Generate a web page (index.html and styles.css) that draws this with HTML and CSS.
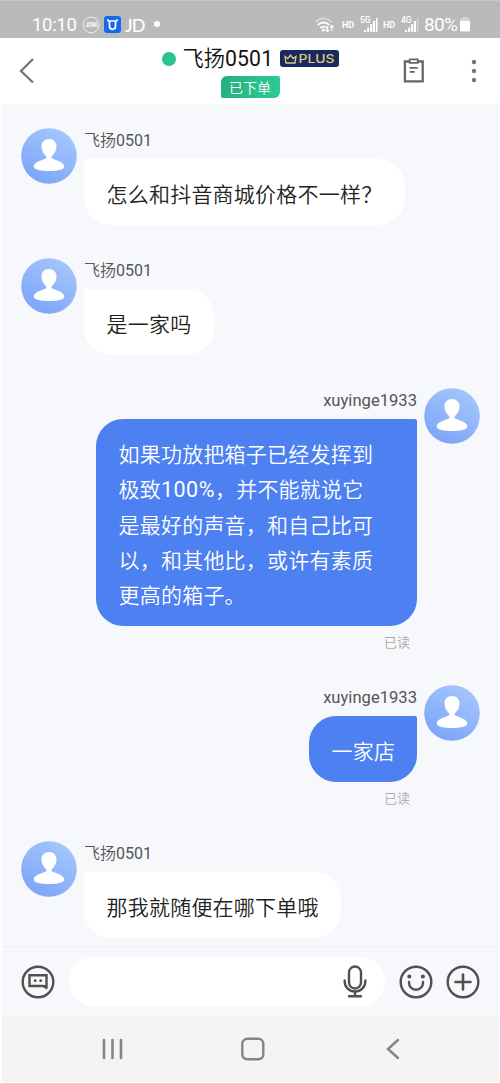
FILE: index.html
```
<!DOCTYPE html>
<html lang="zh-CN">
<head>
<meta charset="utf-8">
<title>飞扬0501</title>
<link rel="stylesheet" href="styles.css">
</head>
<body>
<svg class="defs" width="0" height="0">
  <defs>
    <linearGradient id="sky" x1="0.8" y1="0" x2="0.2" y2="1"><stop offset="0" stop-color="#a6c8fd"/><stop offset="1" stop-color="#7ba3f8"/></linearGradient>
    <symbol id="avatar" viewBox="0 0 56 56">
      <circle cx="28" cy="28" r="27.8" fill="url(#sky)"/>
      <path fill="#fff" d="M28 11c4.600 0 7.500 3.200 7.500 7.500 0 3.500-1.800 7.200-4.400 9.400-1 .9-.8 2.200.6 2.800 3.400 1.400 11.600 3.500 11.600 7.600 0 4-8 4.700-15.300 4.700s-15.300-.7-15.300-4.700c0-4.100 8.200-6.200 11.600-7.600 1.400-.6 1.600-1.900.6-2.800-2.600-2.200-4.400-5.900-4.400-9.400C20.500 14.200 23.400 11 28 11z"/>
    </symbol>
  </defs>
</svg>
<div class="phone">
  <div class="status">
    <span class="clock">10:10</span>
    <svg class="jdm" width="18" height="18" viewBox="0 0 18 18"><circle cx="9" cy="9" r="7.900" fill="none" stroke="#eee" stroke-width="1"/><text x="3.200" y="11.200" textLength="11.600" lengthAdjust="spacingAndGlyphs" class="jdm-text">JDM</text></svg>
    <svg class="app" width="17" height="17" viewBox="0 0 17 17"><rect width="17" height="17" rx="3" fill="#1768ee"/><path d="M3.600 3.300 4.300 5h8.400l.7-1.700M5.500 5v5.300a3 3 0 0 0 6 0V5" fill="none" stroke="#fff" stroke-width="1.700"/></svg>
    <span class="jd">JD</span>
    <span class="dot"></span>
    <span class="grow"></span>
    <svg class="wifi" width="21" height="16" viewBox="0 0 21 16" fill="none" stroke-width="1.700"><path d="M1 5.200Q9.500-2.400 18 5.200" stroke="#d6d6d6"/><path d="M3.600 8q5.900-5 11.800 0M6.200 11q3.300-2.800 6.600 0" stroke="#fff"/><circle cx="9.300" cy="13" r="1.500" fill="#fff"/><path d="M13.500 9v5.500m-1.800-1.700 1.800 1.800 1.800-1.800M17.800 14V8.500M16 10.300l1.800-1.800 1.800 1.800" stroke="#fff" stroke-width="1.200"/></svg>
    <span class="hd">HD</span>
    <svg class="signal" width="19" height="17" viewBox="0 0 19 17"><text x="0" y="6.500" class="net">5G</text><path d="M4 14h2v2H4zM7.200 11.500h2V16h-2zM10.200 8h2v8h-2zM13 5h2v11h-2zM15.900 2h1.600v14h-1.600z" fill="#fff"/></svg>
    <span class="hd hd2">HD</span>
    <svg class="signal sig2" width="19" height="17" viewBox="0 0 19 17"><text x="0" y="6.500" class="net">4G</text><path d="M4 14h2v2H4zM7.200 11.500h2V16h-2zM10.200 8h2v8h-2zM13 5h2v11h-2z" fill="#fff"/><path d="M15.900 2h1.600v14h-1.600z" fill="#d0d0d0"/></svg>
    <span class="percent">80%</span>
    <svg class="battery" width="10" height="15" viewBox="0 0 10 15"><path d="M3 0h4v1.500H3zM1.500 1.500h7Q10 1.500 10 3v2H0V3q0-1.500 1.500-1.500z" fill="#d6d6d6"/><path d="M0 4h10v9q0 1.500-1.500 1.500h-7Q0 14.500 0 13z" fill="#fff"/></svg>
  </div>

  <header class="header">
    <svg class="back" width="18" height="28" viewBox="0 0 18 28"><path d="M15 2 3 14l12 11.500" fill="none" stroke="#757575" stroke-width="2.300"/></svg>
    <div class="title">
      <div class="title-row">
        <span class="online"></span>
        <span class="peer">飞扬<span class="digits">0501</span></span>
        <span class="plus"><svg width="13" height="10" viewBox="0 0 13 10"><path d="M1 2.500 3.800 4.600 6.500 1l2.700 3.600L12 2.500 11 9H2z" fill="none" stroke="#e3c978" stroke-width="1.300"/></svg><svg width="37" height="13" viewBox="0 0 37 13"><text x="0.500" y="10.500" textLength="36" lengthAdjust="spacingAndGlyphs" class="plus-text">PLUS</text></svg></span>
      </div>
      <span class="ordered">已下单</span>
    </div>
    <div class="tools">
      <svg width="22" height="26" viewBox="0 0 22 26" fill="none" stroke="#666" stroke-width="2.300"><path d="M1.900 3.500h17.800v19.800H1.900z"/><path d="M6.700 1.300h8v3.500h-8z" fill="#fff" stroke-width="1.800"/><path d="M6.700 9.800h8M6.700 13.800h5" stroke-width="1.800"/></svg>
      <svg width="6" height="24" viewBox="0 0 6 24" fill="#757575"><circle cx="3" cy="3" r="2.200"/><circle cx="3" cy="12" r="2.200"/><circle cx="3" cy="21" r="2.200"/></svg>
    </div>
  </header>

  <main class="chat">
    <article class="msg">
      <svg class="avatar"><use href="#avatar"/></svg>
      <div class="body"><span class="name">飞扬<span class="digits">0501</span></span><p class="bubble">怎么和抖音商城价格不一样？</p></div>
    </article>
    <article class="msg">
      <svg class="avatar"><use href="#avatar"/></svg>
      <div class="body"><span class="name">飞扬<span class="digits">0501</span></span><p class="bubble">是一家吗</p></div>
    </article>
    <article class="msg mine">
      <svg class="avatar"><use href="#avatar"/></svg>
      <div class="body"><span class="name">xuyinge1933</span><p class="bubble">如果功放把箱子已经发挥到<br>极致<span class="digits">100%</span>，并不能就说它<br>是最好的声音，和自己比可<br>以，和其他比，或许有素质<br>更高的箱子。</p><span class="read">已读</span></div>
    </article>
    <article class="msg mine">
      <svg class="avatar"><use href="#avatar"/></svg>
      <div class="body"><span class="name">xuyinge1933</span><p class="bubble">一家店</p><span class="read">已读</span></div>
    </article>
    <article class="msg">
      <svg class="avatar"><use href="#avatar"/></svg>
      <div class="body"><span class="name">飞扬<span class="digits">0501</span></span><p class="bubble">那我就随便在哪下单哦</p></div>
    </article>
  </main>

  <footer class="composer">
    <svg width="34" height="34" viewBox="0 0 34 34" fill="none" stroke="#505050" stroke-width="2.400"><circle cx="17" cy="17" r="15.300"/><path d="M8.500 10.300h17V22l-3.200-1H8.500z"/><path d="M21 20.500h4.500V24z" fill="#505050" stroke-width="1"/><circle cx="14.200" cy="15.700" r="1.400" fill="#505050" stroke="none"/><circle cx="19.700" cy="15.700" r="1.400" fill="#505050" stroke="none"/></svg>
    <div class="input">
      <svg width="24" height="33" viewBox="0 0 24 33" fill="none" stroke="#505050" stroke-width="2.400" stroke-linecap="round"><rect x="6" y="1.500" width="12" height="22" rx="6"/><path d="M1.700 15.500v1.300a10.300 9.700 0 0 0 20.600 0v-1.300M12 26.700V31M6 31.300h12"/></svg>
    </div>
    <svg class="smile" width="34" height="34" viewBox="0 0 34 34" fill="none" stroke="#505050" stroke-width="2.400"><circle cx="17" cy="17" r="15.300"/><path d="M10 17v.8a7 7 0 0 0 14 0V17" stroke-linecap="round"/><circle cx="10.300" cy="11.500" r="2" fill="#505050" stroke="none"/><circle cx="23.900" cy="11.500" r="2" fill="#505050" stroke="none"/></svg>
    <svg class="add" width="34" height="34" viewBox="0 0 34 34" fill="none" stroke="#505050" stroke-width="2.400"><circle cx="17" cy="17" r="15.300"/><path d="M17 9.500v15M9.500 17h15" stroke-width="2.600" stroke-linecap="round"/></svg>
  </footer>

  <nav class="nav">
    <svg width="22" height="22" viewBox="0 0 22 22" stroke="#858585" stroke-width="2.600" stroke-linecap="round"><path d="M2 2v18M10.500 2v18M19 2v18"/></svg>
    <svg class="home" width="24" height="24" viewBox="0 0 24 24" fill="none" stroke="#858585" stroke-width="2.400"><rect x="1.300" y="1.800" width="21" height="20.500" rx="5"/></svg>
    <svg width="14" height="22" viewBox="0 0 14 22" fill="none" stroke="#858585" stroke-width="2.400" stroke-linecap="round"><path d="M12 2 2 11l10 9"/></svg>
  </nav>
</div>
</body>
</html>
```
FILE: styles.css
```
* { box-sizing: border-box; }
body {
  margin: 0;
  background: #fff;
  font-family: Roboto, "Noto Sans CJK SC", sans-serif;
}
svg { display: block; flex: none; }
.defs { position: absolute; }
.phone {
  width: 500px;
  height: 1083px;
  display: flex;
  flex-direction: column;
}
.digits { font-family: Roboto, sans-serif; font-weight: 400; }

.status {
  height: 38px;
  flex: none;
  background: #bababa;
  border-top: 1px solid #c8c8c8;
  display: flex;
  align-items: center;
  padding: 10px 30px 0 32px;
  color: #fff;
}
.clock, .percent { font-size: 19px; line-height: 20px; }
.clock { width: 50px; white-space: nowrap; font-size: 18.500px; letter-spacing: -0.300px; }
.app { margin-left: 4px; }
.jdm-text { font-size: 6.500px; font-weight: 700; fill: #fff; }
.jd { margin-left: 4px; font: 500 18px/20px Lato, sans-serif; width: 18px; letter-spacing: -1px; }
.dot { width: 6px; height: 6px; border-radius: 50%; background: #fff; margin: -1px 0 0 11px; }
.grow { flex: 1; }
.hd { font-size: 9px; font-weight: 700; margin-left: 7px; width: 13px; }
.signal { margin-left: 5px; }
.hd2 { margin-left: 4px; }
.net { font-size: 8.500px; font-weight: 500; fill: #fff; }
.percent { margin-left: 4px; letter-spacing: -0.700px; width: 34px; }
.battery { margin-left: 2px; }

.header {
  height: 66px;
  flex: none;
  display: grid;
  grid-template-columns: 100px 1fr 100px;
}
.back { margin: 19px 0 0 18px; }
.title { display: flex; flex-direction: column; align-items: center; padding-top: 8px; }
.title-row { display: flex; align-items: center; height: 26px; }
.online { width: 14px; height: 14px; border-radius: 50%; background: #29c38b; margin-right: 7px; margin-top: -1px; }
.peer { font-size: 21.200px; font-weight: 350; line-height: 26px; color: #111; width: 91px; white-space: nowrap; }
.peer .digits { letter-spacing: 0.200px; }
.plus {
  width: 59px;
  height: 17px;
  border-radius: 3px;
  background: #182860;
  display: flex;
  align-items: center;
  justify-content: center;
  gap: 1px;
  margin: -1px 0 0 6px;
}
.plus-text { font: 500 11.500px Inter, sans-serif; fill: #e3c978; }
.ordered {
  margin-top: 4px;
  width: 59px;
  height: 22px;
  border-radius: 6px 2px 6px 2px;
  background: linear-gradient(90deg, #25b080, #2bcb92);
  color: #fff;
  font-size: 14px;
  font-weight: 350;
  line-height: 24px;
  text-align: center;
}
.tools { display: flex; gap: 46px; padding: 21px 0 0 3px; }
.tools svg:first-child { margin-top: -1px; }

.chat {
  flex: 1;
  min-height: 0;
  margin: 0 1px 0 2px;
  padding: 24px 19px 0 19px;
  background: #f7f8fb;
  display: flex;
  flex-direction: column;
  gap: 33px;
}
.msg { display: flex; gap: 7px; }
.mine { flex-direction: row-reverse; }
.avatar { width: 56px; height: 56px; }
.body { display: flex; flex-direction: column; align-items: flex-start; }
.mine .body { align-items: flex-end; }
.name { font-size: 16px; font-weight: 350; line-height: 25px; height: 31px; color: #555; }
.mine .name { font-size: 16.600px; font-weight: 400; }
.bubble {
  margin: 0;
  padding: 17px 22.500px 13.700px;
  border-radius: 2px 27px 27px 27px;
  background: #fff;
  color: #222;
  font-family: "Noto Sans CJK SC", sans-serif;
  font-size: 21px;
  font-weight: 350;
  letter-spacing: 0.220px;
  line-height: 35.300px;
  white-space: nowrap;
}
.bubble .digits { font-size: 21.500px; letter-spacing: 0.500px; line-height: 1; }
.mine .bubble { width: 321px; border-radius: 27px 2px 27px 27px; background: #4d80f0; color: #fff; }
.mine:nth-child(4) .bubble { width: 108px; }
.read { font-size: 13px; font-weight: 350; line-height: 18px; height: 26px; padding: 8px 7px 0 0; color: #aaa; }

.composer {
  height: 70px;
  flex: none;
  margin: 0 1px 0 2px;
  padding: 0 19px 0 19px;
  background: #f7f8fb;
  border-top: 1px solid #eeeff1;
  display: flex;
  align-items: center;
}
.input {
  flex: 1;
  height: 49px;
  margin: 0 14px;
  border-radius: 25px;
  background: #fff;
  display: flex;
  align-items: center;
  justify-content: flex-end;
  padding-right: 18px;
}
.add { margin-left: 13px; }

.nav {
  height: 66px;
  flex: none;
  margin: 0 1px 1px 2px;
  padding: 0 99px 0 100px;
  background: #f4f4f4;
  display: flex;
  align-items: center;
  justify-content: space-between;
}
.home { margin-right: 5px; }
```
